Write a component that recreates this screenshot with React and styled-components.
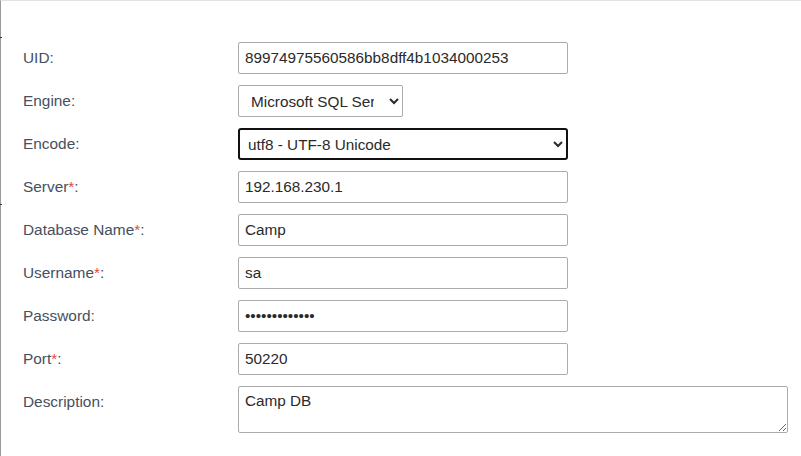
import React from 'react'
import styled, {createGlobalStyle, css} from 'styled-components'

const GlobalStyle = createGlobalStyle`
	html, body {
		margin: 0;
		padding: 0;
		background: #fff;
	}
	body {
		font-family: 'Liberation Sans', Arial, sans-serif;
	}
`

// Wrappers

const Page = styled.div`
	box-sizing: border-box;
	width: 801px;
	height: 456px;
	border-left: 1px solid #9a9a9a;
	border-top: 1px solid #e2e2e2;
	padding: 41px 0 0 22px;
	position: relative;
`

const Tick = styled.div`
	position: absolute;
	left: -1px;
	top: ${p => p.top}px;
	width: 2px;
	height: 1px;
	background: #333;
`

const Form = styled.div`
	display: grid;
	grid-template-columns: 215px 550px;
	grid-template-rows: 32px 32px 32px 32px 32px 32px 32px 32px auto;
	row-gap: 11px;
	align-items: center;
`

// Labels

const Label = styled.div`
	font-size: 15.4px;
	color: #45505f;
	line-height: 32px;
	height: 32px;
	align-self: start;
`

const Star = styled.span`
	color: #e9483b;
`

// Fields

const fieldBase = css`
	box-sizing: border-box;
	font-family: 'Liberation Sans', Arial, sans-serif;
	font-size: 15.3px;
	color: #2a2a2a;
	background: #fff;
	border: 1px solid #ababab;
	border-radius: 2px;
	outline: none;
`

const Input = styled.input`
	${fieldBase};
	width: ${p => p.w || 330}px;
	height: 32px;
	padding: 0 6px;
`

const Select = styled.select`
	${fieldBase};
	width: ${p => p.w || 330}px;
	height: 32px;
	padding: 0 ${p => (p.focused ? 6 : 12)}px 0 ${p => (p.focused ? 4 : 8)}px;
	${p =>
		p.focused &&
		css`
			border: 2px solid #111;
			border-radius: 3px;
		`};
`

const TextArea = styled.textarea`
	${fieldBase};
	width: 550px;
	height: 47px;
	padding: 5px 6px;
	resize: both;
	display: block;
`

const Field = styled.div`
	display: flex;
	align-items: center;
`

const Row = ({label, required, children}) => (
	<>
		<Label>
			{label}
			{required && <Star>*</Star>}:
		</Label>
		<Field>{children}</Field>
	</>
)

export default function App() {
	return (
		<>
			<GlobalStyle />
			<Page>
				<Tick top={36} />
				<Tick top={203} />
				<Form>
					<Row label="UID">
						<Input defaultValue="89974975560586bb8dff4b1034000253" readOnly />
					</Row>
					<Row label="Engine">
						<Select w={165} defaultValue="mssql">
							<option value="mssql">Microsoft SQL Server</option>
							<option value="mysql">MySQL</option>
							<option value="pg">PostgreSQL</option>
						</Select>
					</Row>
					<Row label="Encode">
						<Select focused defaultValue="utf8">
							<option value="utf8">utf8 - UTF-8 Unicode</option>
							<option value="latin1">latin1 - cp1252 West European</option>
						</Select>
					</Row>
					<Row label="Server" required>
						<Input defaultValue="192.168.230.1" />
					</Row>
					<Row label="Database Name" required>
						<Input defaultValue="Camp" />
					</Row>
					<Row label="Username" required>
						<Input defaultValue="sa" />
					</Row>
					<Row label="Password">
						<Input type="password" defaultValue="1234567890123" />
					</Row>
					<Row label="Port" required>
						<Input defaultValue="50220" />
					</Row>
					<Row label="Description">
						<TextArea defaultValue="Camp DB" />
					</Row>
				</Form>
			</Page>
		</>
	)
}
